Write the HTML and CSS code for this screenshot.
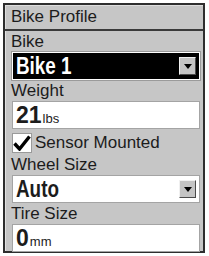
FILE: index.html
```html
<!DOCTYPE html>
<html lang="en">
<head>
    <meta charset="UTF-8">
    <title>Bike Profile</title>
    <link rel="stylesheet" href="styles.css">
</head>
<body>
    <div class="screen">
        <div class="title">Bike Profile</div>

        <div class="body">
            <div class="label">Bike</div>
            <div class="field select dark">
                <span class="value narrow">Bike 1</span>
                <span class="arrow-btn"><span class="arrow"></span></span>
            </div>

            <div class="label">Weight</div>
            <div class="field">
                <span class="value">21</span><span class="unit">lbs</span>
            </div>

            <div class="check-row">
                <span class="checkbox">
                    <svg width="18" height="16" viewBox="0 0 18 16">
                        <path d="M1.5 8.5 L6.5 14 L16.5 1.5" fill="none" stroke="#000" stroke-width="3.4"/>
                    </svg>
                </span>
                <span class="check-text">Sensor Mounted</span>
            </div>

            <div class="label">Wheel Size</div>
            <div class="field select">
                <span class="value narrow">Auto</span>
                <span class="arrow-btn"><span class="arrow"></span></span>
            </div>

            <div class="label">Tire Size</div>
            <div class="field">
                <span class="value">0</span><span class="unit">mm</span>
            </div>
        </div>
    </div>
</body>
</html>
```

FILE: styles.css
```css
body {
    margin: 0;
    background: #fff;
    font-family: "Liberation Sans", Arial, sans-serif;
    color: #1c1c1c;
}

.screen {
    position: relative;
    margin: 3px 0 0 3px;
    width: 198px;
    height: 246px;
    border: 2px solid #2e2e2e;
    background: #c6c6c6;
    box-shadow: inset 1px 1px 0 #e2e2e2;
}

.title {
    height: 24px;
    line-height: 24px;
    padding-left: 6px;
    font-size: 17px;
    border-bottom: 2px solid #3a3a3a;
    box-shadow: inset 1px 1px 0 #dedede;
}

.body {
    padding: 0 3px 0 7px;
}

.label {
    height: 21px;
    line-height: 21px;
    margin-left: -1px;
    font-size: 17px;
}

.field {
    display: flex;
    align-items: center;
    height: 26px;
    background: #fff;
    border: 1px solid #a4a4a4;
    padding-left: 3px;
}

.field.dark {
    background: #000;
    color: #fff;
    border: 1px solid #fff;
    outline: 1px solid #9a9a9a;
}

.value {
    font-weight: bold;
    font-size: 23px;
    line-height: 26px;
}

.value.narrow {
    display: inline-block;
    transform: scaleX(0.82);
    transform-origin: left center;
}

.unit {
    font-size: 13px;
    margin-left: 1px;
    margin-top: 6px;
}

.select {
    justify-content: space-between;
    padding-right: 3px;
}

.arrow-btn {
    display: flex;
    align-items: center;
    justify-content: center;
    width: 15px;
    height: 16px;
    background: #c4c4c4;
    border: 1px solid;
    border-color: #f0f0f0 #4a4a4a #4a4a4a #f0f0f0;
}

.arrow {
    width: 0;
    height: 0;
    border-left: 4px solid transparent;
    border-right: 4px solid transparent;
    border-top: 5px solid #000;
}

.check-row {
    display: flex;
    align-items: center;
    height: 23px;
    margin-top: 2px;
}

.checkbox {
    display: flex;
    align-items: center;
    justify-content: center;
    width: 18px;
    height: 18px;
    background: #fff;
    border: 1px solid #9a9a9a;
}

.check-text {
    font-size: 17px;
    margin-left: 3px;
}
```
